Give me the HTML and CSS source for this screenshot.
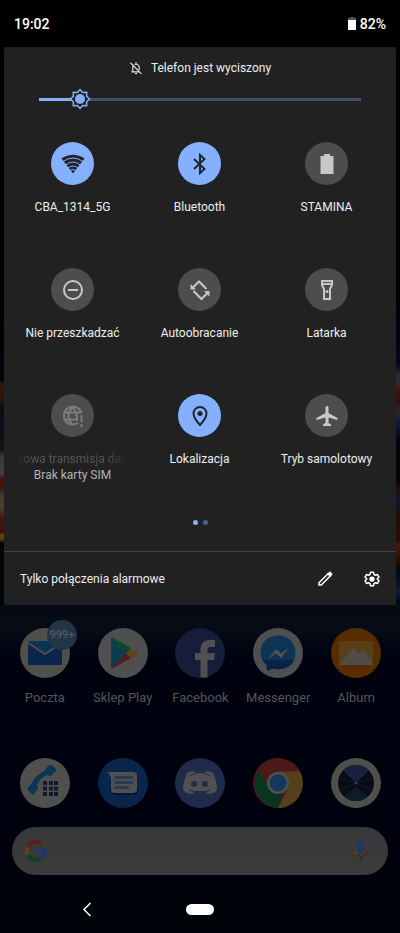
FILE: index.html
```html
<!DOCTYPE html>
<html lang="pl">
<head>
  <meta charset="UTF-8">
  <meta name="viewport" content="width=device-width, initial-scale=1">
  <title>Szybkie ustawienia</title>
  <link rel="stylesheet" href="styles.css">
</head>
<body>

  <header class="status-bar">
    <span>19:02</span>
    <span class="battery">
      <svg width="8" height="13" viewBox="0 0 8 13"><path fill="#555" d="M2 0h4v1h2v3H0V1h2z"/><path fill="#fff" d="M0 3h8v10H0z"/></svg>
      82%
    </span>
  </header>

  <main class="panel">
    <div class="muted">
      <svg width="14" height="14" viewBox="0 0 24 24" fill="none" stroke="#e4e4e4" stroke-width="2">
        <path d="M2.500 3L21.500 22M4 18.500h15M6.500 18v-7q0-2 1-3M9.500 6Q12 4.500 14.500 6q3 1.500 3 5v4.500M12 2v3"/>
        <path fill="#e4e4e4" stroke="none" d="M10 20.500h4a2 2 0 0 1-4 0z"/>
      </svg>
      <span>Telefon jest wyciszony</span>
    </div>

    <input class="brightness" type="range" min="0" max="100" value="10" aria-label="Jasność">

    <div class="tiles">
      <button class="tile on" type="button">
        <span class="circle">
          <svg width="24" height="24" viewBox="0 0 24 24">
            <path fill="#212429" d="M.5 6.500Q12-1 23.500 6.500L12 21.500z"/>
            <path fill="none" stroke="#84b0ff" stroke-width="1" d="M2 9.500q10-7 20 0M4.500 13q7.500-6 15 0M7 16q5-4 10 0M9 18.500q3-2 6 0"/>
          </svg>
        </span>
        <span class="label">CBA_1314_5G</span>
      </button>

      <button class="tile on" type="button">
        <span class="circle">
          <svg width="24" height="24" viewBox="0 0 24 24" fill="none" stroke="#212429" stroke-width="2"><path d="M6 7l10.500 10-4.500 4V3l4.500 4L6 17"/></svg>
        </span>
        <span class="label">Bluetooth</span>
      </button>

      <button class="tile" type="button">
        <span class="circle">
          <svg width="24" height="24" viewBox="0 0 24 24" fill="#c8c8c8"><path d="M9 2h6v2h3.500v18h-13V4H9z"/></svg>
        </span>
        <span class="label">STAMINA</span>
      </button>

      <button class="tile" type="button">
        <span class="circle">
          <svg width="24" height="24" viewBox="0 0 24 24" fill="none" stroke="#c8c8c8" stroke-width="2"><circle cx="12" cy="12" r="9"/><path d="M7 12h10"/></svg>
        </span>
        <span class="label">Nie przeszkadzać</span>
      </button>

      <button class="tile" type="button">
        <span class="circle">
          <svg width="24" height="24" viewBox="0 0 24 24" fill="none" stroke="#c8c8c8" stroke-width="2">
            <path d="M18.500 11L11 3.500 5 9.500M5.500 13l8 8 6-6"/>
            <path fill="#c8c8c8" stroke="none" d="M2.500 6v5.500H8zM21.500 18.500V13H16z"/>
          </svg>
        </span>
        <span class="label">Autoobracanie</span>
      </button>

      <button class="tile" type="button">
        <span class="circle">
          <svg width="24" height="24" viewBox="0 0 24 24" fill="none" stroke="#c8c8c8" stroke-width="2">
            <path d="M7 3h10v4l-2 4v10H9V11L7 7zM7 6h10"/>
            <circle cx="12" cy="13.500" r="1.500" fill="#c8c8c8" stroke="none"/>
          </svg>
        </span>
        <span class="label">Latarka</span>
      </button>

      <button class="tile disabled" type="button" disabled>
        <span class="circle">
          <svg width="24" height="24" viewBox="0 0 24 24" fill="none" stroke="#7b7b7b" stroke-width="2">
            <path d="M17 19A9 9 0 1 1 20.500 9M2.500 8.500h18M2.500 15.500h14M11.500 3q-8 9 0 18M11.500 3q5 5 4.500 14M20.500 11v7M20.500 20v3"/>
          </svg>
        </span>
        <span class="label fade">kowa transmisja dan</span>
        <span class="label sub">Brak karty SIM</span>
      </button>

      <button class="tile on" type="button">
        <span class="circle">
          <svg width="24" height="24" viewBox="0 0 24 24" fill="none" stroke="#212429" stroke-width="2">
            <path d="M12 3a6.500 6.500 0 0 0-6.500 6.500C5.500 14 12 21 12 21s6.500-7 6.500-11.500A6.500 6.500 0 0 0 12 3z"/>
            <circle cx="12" cy="9.500" r="2.500" fill="#212429" stroke="none"/>
          </svg>
        </span>
        <span class="label">Lokalizacja</span>
      </button>

      <button class="tile" type="button">
        <span class="circle">
          <svg width="24" height="24" viewBox="0 0 24 24" fill="#c8c8c8"><path d="M22.500 16v-2l-9-5V3.500a1.500 1.500 0 0 0-3 0V9l-9 5v2l9-2.500V19L8 20.500V22h8v-1.500L13.500 19v-5.500z"/></svg>
        </span>
        <span class="label">Tryb samolotowy</span>
      </button>
    </div>

    <div class="pager"><span class="dot active"></span><span class="dot"></span></div>

    <footer class="panel-footer">
      <span class="carrier">Tylko połączenia alarmowe</span>
      <button class="icon-button" type="button" aria-label="Edytuj">
        <svg width="18" height="18" viewBox="0 0 24 24" fill="none" stroke="#fff" stroke-width="2">
          <path d="M4 17L16 5l3 3L7 20H4z"/>
          <path fill="#fff" stroke="none" d="M15 5l2.500-2.500q1-1 2 0l2 2q1 1 0 2L19 9z"/>
        </svg>
      </button>
      <button class="icon-button" type="button" aria-label="Ustawienia">
        <svg width="18" height="18" viewBox="0 0 24 24" fill="none" stroke="#fff" stroke-width="2" stroke-linejoin="round">
          <path d="M10 3h4l.6 2.800 2 1.200 2.700-.9 2 3.500-2.100 1.900v1l2.100 1.900-2 3.500-2.700-.9-2 1.200L14 21h-4l-.6-2.800-2-1.200-2.700.9-2-3.500 2.100-1.900v-1L2.700 9.600l2-3.500 2.700.9 2-1.200z"/>
          <circle cx="12" cy="12" r="3.500" fill="#fff" stroke="none"/>
        </svg>
      </button>
    </footer>
  </main>

  <section class="launcher">
    <div class="apps">
      <a class="app" href="#">
        <span class="app-icon">
          <svg viewBox="0 0 50 50">
            <circle cx="25" cy="25" r="25" fill="#4f4f4c"/>
            <path fill="#09264a" d="M8 13h34v24H8z"/>
            <path fill="#0a3450" d="M9 13h32L25 25z"/>
            <path fill="none" stroke="#4f4f4c" stroke-width="2" d="M7 14l18 12 18-12"/>
          </svg>
          <span class="badge">999+</span>
        </span>
        <span class="app-name">Poczta</span>
      </a>
      <a class="app" href="#">
        <span class="app-icon">
          <svg viewBox="0 0 50 50">
            <circle cx="25" cy="25" r="25" fill="#4f4f4f"/>
            <path fill="#0b3c50" d="M13 10v30l16-15z"/>
            <path fill="#084a2c" d="M13 10q1-1 3 .5L33 20l-4.500 5.500z"/>
            <path fill="#501c1c" d="M13 40q1 1 3-.5L33 30l-4.500-5z"/>
            <path fill="#5c4518" d="M33 20l7 4q1 1 0 2l-7 4.500-5-5z"/>
          </svg>
        </span>
        <span class="app-name">Sklep Play</span>
      </a>
      <a class="app" href="#">
        <span class="app-icon">
          <svg viewBox="0 0 50 50">
            <circle cx="25" cy="25" r="25" fill="#151d38"/>
            <path fill="none" stroke="#505054" stroke-width="7" d="M29 49.500V21q0-5.500 6-5.500h5"/>
            <path fill="#505054" d="M20 25h20l-1 7H20z"/>
          </svg>
        </span>
        <span class="app-name">Facebook</span>
      </a>
      <a class="app" href="#">
        <span class="app-icon">
          <svg viewBox="0 0 50 50">
            <circle cx="25" cy="25" r="25" fill="#4f4f4f"/>
            <path fill="#0b3552" d="M25 7.500c-10 0-17.500 7-17.500 17 0 5 2 9 6 12L14 43l6-2.500c13 3 22.500-5 22.500-16 0-10-7.500-17-17.500-17z"/>
            <path fill="#092348" d="M9 32h32c-3 7-11 11-21 8.500L14 43l-.5-6.500q-3-2-4.500-4.500z"/>
            <path fill="#535353" d="M15 31l8-10 5 4.500 8-6-8 10.500-5-4.500z"/>
          </svg>
        </span>
        <span class="app-name">Messenger</span>
      </a>
      <a class="app" href="#">
        <span class="app-icon">
          <svg viewBox="0 0 50 50">
            <circle cx="25" cy="25" r="25" fill="#572d00"/>
            <path fill="#574019" d="M8 13h34v24H8z"/>
            <path fill="#504d49" d="M9 36l13-16 7 6 3-4 9 10v5H9z"/>
          </svg>
        </span>
        <span class="app-name">Album</span>
      </a>
    </div>

    <div class="apps dock">
      <a class="app-icon" href="#" aria-label="Telefon">
        <svg viewBox="0 0 50 50">
          <circle cx="25" cy="25" r="25" fill="#4f4f4c"/>
          <path fill="#0b3455" d="M7 31l4-5q4-8 13-13l4-5 4-1 5 5-6 6-4-1q-7 3-10 10l1 4-5 6z"/>
          <path fill="#101a2c" d="M23 23h4v4h-4zM29 23h4v4h-4zM34 23h4v4h-4zM23 28.500h4v4h-4zM29 28.500h4v4h-4zM34 28.500h4v4h-4zM23 34h4v4h-4zM29 34h4v4h-4zM34 34h4v4h-4z"/>
        </svg>
      </a>
      <a class="app-icon" href="#" aria-label="Wiadomości">
        <svg viewBox="0 0 50 50">
          <circle cx="25" cy="25" r="25" fill="#09264a"/>
          <path fill="#061a35" d="M14 34h25v1q0 2-4 2H17q-3 0-3-3z"/>
          <path fill="#505050" d="M10 14h25q4 0 4 4v13q0 4-4 4H17q-4 0-4-4V20z"/>
          <path fill="none" stroke="#2b3b4f" stroke-width="3" stroke-linecap="round" d="M17.500 19.500H34M17.500 24.500H34M17.500 29.500h12"/>
        </svg>
      </a>
      <a class="app-icon" href="#" aria-label="Discord">
        <svg viewBox="0 0 50 50">
          <circle cx="25" cy="25" r="25" fill="#202b4a"/>
          <path fill="#505053" d="M12 15q5-3 8-1l1 1h8l1-1q3-2 8 1 4 9 4 17-3 4-9 4l-3-3H20l-3 3q-6 0-9-4 0-8 4-17z"/>
          <circle cx="19" cy="26" r="3" fill="#202b4a"/><circle cx="30" cy="26" r="3" fill="#202b4a"/>
          <path fill="none" stroke="#202b4a" stroke-width="1" d="M14 18q4-2 8-3M36 18q-4-2-8-3M14 32q11 4 22 0"/>
        </svg>
      </a>
      <a class="app-icon" href="#" aria-label="Chrome">
        <svg viewBox="0 0 50 50">
          <circle cx="25" cy="25" r="25" fill="#4e191a"/>
          <path fill="#08351f" d="M5 13l13 17 12 4-5 16A25 25 0 0 1 5 13z"/>
          <path fill="#54401a" d="M25 13.500h22A25 25 0 0 1 25 50l10-20z"/>
          <circle cx="25" cy="25" r="11" fill="#505053"/><circle cx="25" cy="25" r="8.500" fill="#14375a"/>
        </svg>
      </a>
      <a class="app-icon" href="#" aria-label="Aparat">
        <svg viewBox="0 0 50 50">
          <circle cx="25" cy="25" r="25" fill="#4f4f4c"/>
          <circle cx="25" cy="25" r="18" fill="#080c15"/>
          <path fill="#17213d" d="M25 25L12 12.500a18 18 0 0 1 26 0z"/>
          <path fill="#0d1c28" d="M25 28L13 38.500a18 18 0 0 0 24 0z"/>
          <path fill="none" stroke="#111827" d="M25 25L8 20M25 25l17-5M25 25L9 32M25 25l16 7"/>
          <circle cx="25" cy="25" r="1.500" fill="#30384a"/>
        </svg>
      </a>
    </div>

    <div class="search">
      <svg width="22" height="22" viewBox="0 0 22 22" fill="none" stroke-width="4">
        <path stroke="#58201d" d="M3 7a9 9 0 0 1 14-3"/>
        <path stroke="#5c4512" d="M3 7a9 9 0 0 0 0 8"/>
        <path stroke="#134023" d="M3 15a9 9 0 0 0 13 3.500"/>
        <path stroke="#193a6b" d="M16 18.500a9 9 0 0 0 4-7.500h-9"/>
      </svg>
      <input class="search-input" type="text" aria-label="Szukaj">
      <svg width="16" height="20" viewBox="0 0 16 20" fill="none" stroke-width="2">
        <rect x="5" y="0" width="6" height="12" rx="3" fill="#193a6b"/>
        <path stroke="#5c4512" d="M2 10q0 2 2 4"/>
        <path stroke="#58201d" d="M4 14q4 3 8 0 2-2 2-4"/>
        <path stroke="#134023" d="M8 16v4"/>
      </svg>
    </div>
  </section>

  <nav class="nav-bar">
    <button class="nav-button back" type="button" aria-label="Wstecz">
      <svg width="10" height="15" viewBox="0 0 10 15" fill="none" stroke="#fff" stroke-width="1.500"><path d="M8.500 1L2 7.500 8.500 14"/></svg>
    </button>
    <button class="nav-button home" type="button" aria-label="Ekran główny"></button>
  </nav>

</body>
</html>
```
FILE: styles.css
```css
* {
  box-sizing: border-box;
}
body {
  margin: 0;
  min-height: 100vh;
  font-family: Roboto, "Liberation Sans", sans-serif;
  font-size: 12px;
  line-height: 16px;
  color: #eee;
  /* wallpaper: light trails show on both sides of the panel */
  background:
    linear-gradient(#000006 300px, #02050f 380px, #301408 384px, #30140c 398px, #0c0a18 410px, #151018 450px, #38383c 456px, #404044 474px, #48120e 478px, #48120e 488px, #3c3838 494px, #4c4024 508px, #48140c 518px, #3a1008 532px, #5c4410 535px, #5c4410 539px, #02040c 543px, #02040c 605px, transparent 605px) left top / 4px 100% no-repeat,
    linear-gradient(#000006 300px, #03081a 365px, #26262c 374px, #2c2c34 384px, #401410 388px, #301014 400px, #26262c 414px, #101838 424px, #04060e 440px, #04060e 480px, #200e0a 490px, #101838 500px, #200c08 512px, #280e0a 542px, #501410 544px, #200c0a 564px, #03060f 570px, #101a38 592px, #03060f 602px, transparent 605px) right top / 4px 100% no-repeat,
    linear-gradient(#000 47px, #050a14 605px, #060b16 630px, #01020f 655px, #00010e 830px, #01030a 900px, #01030a 100%);
}
button {
  margin: 0;
  padding: 0;
  border: none;
  background: none;
  color: inherit;
  font: inherit;
  cursor: pointer;
}
a {
  color: inherit;
  text-decoration: none;
}
svg {
  display: block;
}

/* status bar */
.status-bar {
  display: flex;
  justify-content: space-between;
  align-items: center;
  height: 47px;
  padding: 0 14px;
  background: #000;
  color: #fff;
  font-size: 14px;
  font-weight: 500;
}
.battery {
  display: flex;
  align-items: center;
  gap: 4px;
}

/* quick settings */
.panel {
  margin: 0 4px;
  padding-top: 13px;
  border-radius: 2px;
  background: #212121;
}
.muted {
  display: flex;
  justify-content: center;
  align-items: center;
  gap: 8px;
}
.brightness {
  display: block;
  width: calc(100% - 70px);
  height: 24px;
  margin: 11px 35px 31px;
  appearance: none;
  background: linear-gradient(90deg, #84b0ff 12%, #414e68 12%) center / 100% 3px no-repeat;
}
.brightness::-webkit-slider-thumb {
  appearance: none;
  width: 22px;
  height: 22px;
  background: url("data:image/svg+xml,%3Csvg xmlns='http://www.w3.org/2000/svg' viewBox='0 0 22 22'%3E%3Cpath fill='%23212121' stroke='%2384b0ff' stroke-width='1.500' d='M11 1.500l2.700 2.900 4-.1-.1 4 2.900 2.700-2.900 2.700.1 4-4-.1-2.700 2.900-2.700-2.900-4 .1.1-4L1.500 11l2.900-2.700-.1-4 4 .1z'/%3E%3Ccircle cx='11' cy='11' r='5' fill='%2384b0ff'/%3E%3C/svg%3E") center no-repeat;
}
.tiles {
  display: grid;
  grid-template-columns: repeat(3, 1fr);
  row-gap: 37px;
  padding: 0 6px 0 5px;
}
.tile {
  display: flex;
  flex-direction: column;
  align-items: center;
  min-height: 89px;
}
.circle {
  display: flex;
  justify-content: center;
  align-items: center;
  width: 43px;
  height: 43px;
  margin-bottom: 14px;
  border-radius: 50%;
  background: #4d4d4d;
}
.on .circle {
  background: #84b0ff;
}
.label {
  white-space: nowrap;
}
.disabled {
  color: #555;
}
.fade {
  mask-image: linear-gradient(90deg, transparent, #000 16px, #000 90px, transparent);
}
.sub {
  color: #b4b4b4;
}
.pager {
  display: flex;
  justify-content: center;
  gap: 5px;
  padding: 37px 0 26px;
}
.dot {
  width: 5px;
  height: 5px;
  border-radius: 50%;
  background: #4c628c;
}
.dot.active {
  background: #84b0ff;
}
.panel-footer {
  display: flex;
  align-items: center;
  gap: 29px;
  height: 54px;
  padding: 0 15px 0 16px;
  border-top: 1px solid #424242;
}
.carrier {
  flex: 1;
}

/* home screen */
.launcher {
  padding-top: 23px;
  color: #555558;
}
.apps {
  display: grid;
  grid-template-columns: repeat(5, 1fr);
  justify-items: center;
  padding: 0 5px 0 6px;
}
.app {
  display: flex;
  flex-direction: column;
  align-items: center;
  gap: 12px;
}
.app-icon {
  position: relative;
  width: 50px;
  height: 50px;
}
.badge {
  position: absolute;
  top: -8px;
  right: -7px;
  width: 30px;
  height: 30px;
  border-radius: 50%;
  background: #243449;
  color: #555a60;
  font-size: 11px;
  font-weight: 500;
  line-height: 30px;
  text-align: center;
}
.app-name {
  font-size: 13px;
  white-space: nowrap;
}
.dock {
  margin-top: 52px;
}
.search {
  display: flex;
  align-items: center;
  height: 48px;
  margin: 19px 12px 0;
  padding: 0 19px 0 13px;
  border-radius: 24px;
  background: linear-gradient(#38383a, #3c3c3d);
}
.search-input {
  flex: 1;
  min-width: 0;
  border: none;
  outline: none;
  background: none;
  color: inherit;
  font: inherit;
}

/* navigation */
.nav-bar {
  display: grid;
  grid-template-columns: 1fr 28px 1fr;
  align-items: center;
  padding: 24px 0 14px;
}
.nav-button {
  display: flex;
  justify-content: center;
  align-items: center;
  height: 20px;
}
.back {
  padding-right: 12px;
}
.home {
  height: 11px;
  border-radius: 6px;
  background: #fff;
}
```
